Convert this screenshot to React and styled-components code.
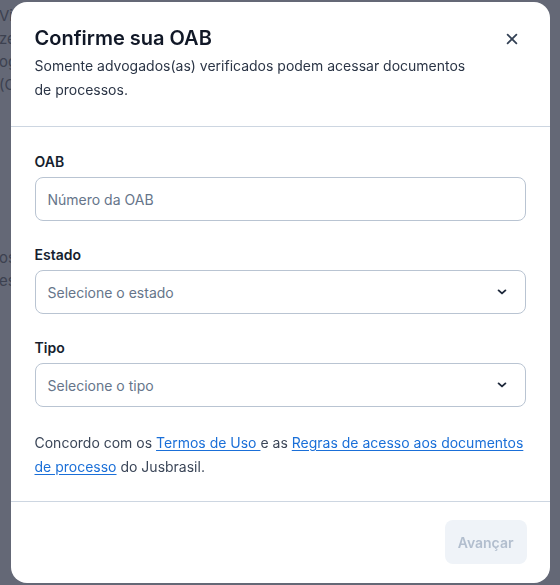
import React from "react";
import styled, { createGlobalStyle } from "styled-components";

const GlobalStyle = createGlobalStyle`
  html, body { margin: 0; padding: 0; }
  body {
    background: #646876;
    font-family: Inter, "Noto Sans", sans-serif;
    -webkit-font-smoothing: antialiased;
  }
  * { box-sizing: border-box; }
`;

const BackPage = styled.div`
  padding: 4px 0 0 0;
  font-size: 15px;
  line-height: 23px;
  color: #3c4150;
  margin-left: -1px;
`;

const BackLine = styled.div`
  margin-top: ${(p) => p.$gap || 0}px;
  white-space: nowrap;
`;

const Overlay = styled.div`
  position: fixed;
  inset: 0;
  display: flex;
  align-items: center;
  justify-content: center;
`;

const Modal = styled.div`
  width: 539px;
  background: #ffffff;
  border-radius: 16px;
  display: flex;
  flex-direction: column;
`;

const Header = styled.header`
  position: relative;
  padding: 22px 24px 24px;
  border-bottom: 1px solid #cdd6e1;
`;

const Title = styled.h2`
  margin: 0;
  font-size: 20px;
  line-height: 28px;
  font-weight: 600;
  color: #111827;
`;

const Subtitle = styled.p`
  margin: 2px 0 0;
  max-width: 445px;
  font-size: 14px;
  line-height: 24px;
  color: #2b3546;
`;

const CloseButton = styled.button`
  position: absolute;
  top: 23px;
  right: 24px;
  width: 28px;
  height: 28px;
  padding: 0;
  border: none;
  background: transparent;
  display: flex;
  align-items: center;
  justify-content: center;
  cursor: pointer;
  color: #334155;
`;

const Body = styled.div`
  padding: 25px 24px 22px;
  display: flex;
  flex-direction: column;
  gap: 24px;
  border-bottom: 1px solid #cdd6e1;
`;

const Field = styled.div`
  display: flex;
  flex-direction: column;
  gap: 5px;
`;

const Label = styled.label`
  font-size: 14px;
  line-height: 20px;
  font-weight: 600;
  color: #161e2e;
`;

const TextInput = styled.input`
  height: 44px;
  width: 100%;
  border: 1px solid #b9c4d2;
  border-radius: 8px;
  padding: 0 12px;
  font-family: inherit;
  font-size: 14px;
  color: #1f2937;
  background: #fff;
  outline: none;
  &::placeholder { color: #66758a; }
`;

const SelectBox = styled.button`
  height: 44px;
  width: 100%;
  border: 1px solid #b9c4d2;
  border-radius: 8px;
  padding: 0 18px 0 12px;
  font-family: inherit;
  font-size: 14px;
  color: #66758a;
  background: #fff;
  display: flex;
  align-items: center;
  justify-content: space-between;
  text-align: left;
  cursor: pointer;
`;

const Terms = styled.p`
  margin: 0;
  font-size: 14px;
  line-height: 24px;
  color: #3b4658;
`;

const Link = styled.a`
  color: #1a6fd8;
  text-decoration: underline;
  text-underline-offset: 2px;
`;

const Footer = styled.footer`
  padding: 18px 23px 19px 24px;
  display: flex;
  justify-content: flex-end;
`;

const PrimaryButton = styled.button`
  height: 44px;
  padding: 0 13px;
  border: none;
  border-radius: 8px;
  background: #eff3f8;
  color: #b2bece;
  font-family: inherit;
  font-size: 14px;
  font-weight: 600;
  cursor: not-allowed;
`;

const CloseIcon = () => (
  <svg width="12" height="12" viewBox="0 0 12 12" fill="none">
    <path d="M1.6 1.6L10.4 10.4M10.4 1.6L1.6 10.4" stroke="currentColor" strokeWidth="1.8" strokeLinecap="round" />
  </svg>
);

const Chevron = () => (
  <svg width="10" height="6" viewBox="0 0 10 6" fill="none">
    <path d="M1.6 1.4L5 4.4L8.4 1.4" stroke="#1e293b" strokeWidth="1.9" strokeLinecap="round" strokeLinejoin="round" />
  </svg>
);

const Select = ({ placeholder }) => (
  <SelectBox type="button">
    <span>{placeholder}</span>
    <Chevron />
  </SelectBox>
);

export default function App() {
  return (
    <>
      <GlobalStyle />
      <BackPage>
        <BackLine>Vi</BackLine>
        <BackLine>ze</BackLine>
        <BackLine>og</BackLine>
        <BackLine>(C</BackLine>
        <BackLine $gap={150}>os</BackLine>
        <BackLine>es</BackLine>
      </BackPage>
      <Overlay>
        <Modal role="dialog" aria-modal="true">
          <Header>
            <Title>Confirme sua OAB</Title>
            <Subtitle>
              Somente advogados(as) verificados podem acessar documentos de processos.
            </Subtitle>
            <CloseButton aria-label="Fechar">
              <CloseIcon />
            </CloseButton>
          </Header>
          <Body>
            <Field>
              <Label>OAB</Label>
              <TextInput placeholder="Número da OAB" />
            </Field>
            <Field>
              <Label>Estado</Label>
              <Select placeholder="Selecione o estado" />
            </Field>
            <Field>
              <Label>Tipo</Label>
              <Select placeholder="Selecione o tipo" />
            </Field>
            <Terms>
              Concordo com os <Link href="#">Termos de Uso </Link>e as{" "}
              <Link href="#">Regras de acesso aos documentos de processo</Link> do Jusbrasil.
            </Terms>
          </Body>
          <Footer>
            <PrimaryButton disabled>Avançar</PrimaryButton>
          </Footer>
        </Modal>
      </Overlay>
    </>
  );
}
